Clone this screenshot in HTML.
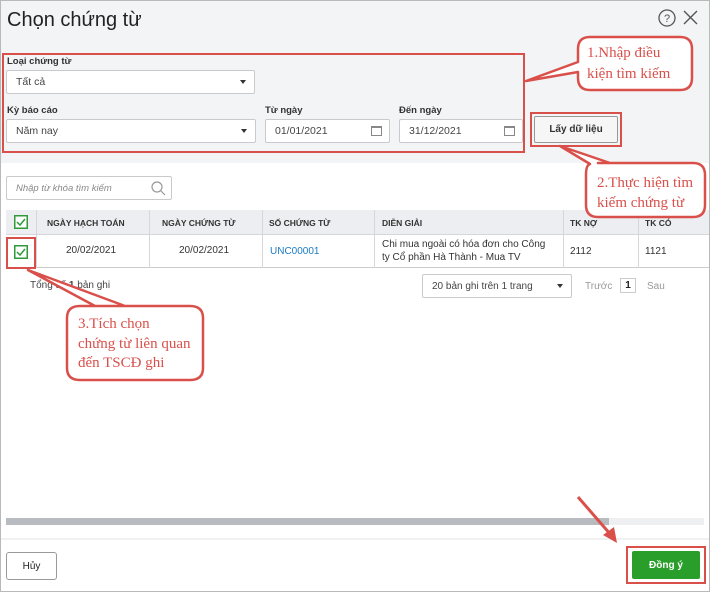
<!DOCTYPE html>
<html><head><meta charset="utf-8"><style>
*{box-sizing:border-box;margin:0;padding:0}
body{width:710px;height:592px;overflow:hidden;font-family:"Liberation Sans",sans-serif;background:#fff;position:relative;color:#222}
.abs{position:absolute}
.top{left:0;top:0;width:710px;height:163px;background:#f3f4f6}
.frame{left:0;top:0;width:710px;height:592px;border:1px solid #b9b9b9}
.lbl{font-size:9.5px;font-weight:bold;color:#333}
.inp{background:#fff;border:1px solid #c8cacd;border-radius:2px;font-size:10.5px;color:#444;padding-left:9px;display:flex;align-items:center}
.caret{position:absolute;right:8px;top:50%;margin-top:-2px;border-left:3.5px solid transparent;border-right:3.5px solid transparent;border-top:4px solid #333}
.red{border:2px solid #d9504b}
.th{font-size:8.5px;font-weight:bold;color:#333;display:flex;align-items:center}
.cb{width:12px;height:12px;border:1.5px solid #2e9a3a;background:#fff}
.cal{position:absolute;right:7px;top:6px;width:11px;height:10px;border:1px solid #888;border-top-width:2px}
</style></head><body>
<div class="abs top"></div>
<div class="abs" style="left:7px;top:9px;font-size:20px;color:#222">Chọn chứng từ</div>
<svg class="abs" style="left:655px;top:7px" width="50" height="22"><circle cx="12" cy="11" r="8" fill="none" stroke="#555" stroke-width="1.3"/><text x="12" y="15" font-size="11" text-anchor="middle" fill="#555" font-family="Liberation Sans">?</text><path d="M29 4 L42 17 M42 4 L29 17" stroke="#555" stroke-width="1.4"/></svg>

<div class="abs red" style="left:2px;top:53px;width:523px;height:100px"></div>
<div class="abs lbl" style="left:7px;top:56px">Loại chứng từ</div>
<div class="abs inp" style="left:6px;top:70px;width:249px;height:24px">Tất cả<span class="caret"></span></div>
<div class="abs lbl" style="left:7px;top:105px">Kỳ báo cáo</div>
<div class="abs inp" style="left:6px;top:119px;width:250px;height:24px">Năm nay<span class="caret"></span></div>
<div class="abs lbl" style="left:265px;top:105px">Từ ngày</div>
<div class="abs inp" style="left:265px;top:119px;width:125px;height:24px">01/01/2021<span class="cal"></span></div>
<div class="abs lbl" style="left:399px;top:105px">Đến ngày</div>
<div class="abs inp" style="left:399px;top:119px;width:124px;height:24px">31/12/2021<span class="cal"></span></div>
<div class="abs red" style="left:530px;top:112px;width:92px;height:35px"></div>
<div class="abs" style="left:534px;top:116px;width:84px;height:27px;border:1px solid #999;border-radius:2px;background:#f6f6f6;font-size:10px;font-weight:bold;display:flex;align-items:center;justify-content:center;color:#333">Lấy dữ liệu</div>

<div class="abs inp" style="left:6px;top:176px;width:166px;height:24px;font-style:italic;color:#888;font-size:9.5px">Nhập từ khóa tìm kiếm</div>
<svg class="abs" style="left:150px;top:180px" width="16" height="16"><circle cx="7" cy="7" r="5" fill="none" stroke="#999" stroke-width="1.2"/><path d="M11 11 L15 15" stroke="#999" stroke-width="1.2"/></svg>

<div class="abs" style="left:6px;top:210px;width:704px;height:25px;background:#eceef1;border-bottom:1px solid #d5d7da"></div>
<div class="abs" style="left:6px;top:235px;width:704px;height:33px;border-bottom:1px solid #ccc"></div>
<div class="abs" style="left:36px;top:210px;height:58px;border-left:1px solid #d5d7da"></div>
<div class="abs" style="left:149px;top:210px;height:58px;border-left:1px solid #d5d7da"></div>
<div class="abs" style="left:262px;top:210px;height:58px;border-left:1px solid #d5d7da"></div>
<div class="abs" style="left:374px;top:210px;height:58px;border-left:1px solid #d5d7da"></div>
<div class="abs" style="left:563px;top:210px;height:58px;border-left:1px solid #d5d7da"></div>
<div class="abs" style="left:638px;top:210px;height:58px;border-left:1px solid #d5d7da"></div>
<svg class="abs" style="left:14px;top:215px" width="14" height="14"><rect x="0.75" y="0.75" width="12.5" height="12.5" fill="#fff" stroke="#2e9a3a" stroke-width="1.5"/><path d="M3 7 L6 10 L11 4" fill="none" stroke="#2e9a3a" stroke-width="1.5"/></svg>
<div class="abs th" style="left:47px;top:210px;height:25px">NGÀY HẠCH TOÁN</div>
<div class="abs th" style="left:162px;top:210px;height:25px">NGÀY CHỨNG TỪ</div>
<div class="abs th" style="left:269px;top:210px;height:25px">SỐ CHỨNG TỪ</div>
<div class="abs th" style="left:382px;top:210px;height:25px">DIỄN GIẢI</div>
<div class="abs th" style="left:570px;top:210px;height:25px">TK NỢ</div>
<div class="abs th" style="left:645px;top:210px;height:25px">TK CÓ</div>
<div class="abs red" style="left:6px;top:237px;width:30px;height:32px"></div>
<svg class="abs" style="left:14px;top:245px" width="14" height="14"><rect x="0.75" y="0.75" width="12.5" height="12.5" fill="#fff" stroke="#2e9a3a" stroke-width="1.5"/><path d="M3 7 L6 10 L11 4" fill="none" stroke="#2e9a3a" stroke-width="1.5"/></svg>
<div class="abs" style="left:66px;top:245px;font-size:10px;color:#333">20/02/2021</div>
<div class="abs" style="left:179px;top:245px;font-size:10px;color:#333">20/02/2021</div>
<div class="abs" style="left:270px;top:246px;font-size:10px;color:#1a7bc4">UNC00001</div>
<div class="abs" style="left:382px;top:238px;font-size:10px;color:#333;line-height:13px">Chi mua ngoài có hóa đơn cho Công<br>ty Cổ phần Hà Thành - Mua TV</div>
<div class="abs" style="left:570px;top:246px;font-size:10px;color:#333">2112</div>
<div class="abs" style="left:645px;top:246px;font-size:10px;color:#333">1121</div>

<div class="abs" style="left:30px;top:280px;font-size:10px;color:#444">Tổng số <b>1</b> bản ghi</div>
<div class="abs inp" style="left:422px;top:274px;width:150px;height:24px;font-size:10px">20 bản ghi trên 1 trang<span class="caret"></span></div>
<div class="abs" style="left:585px;top:281px;font-size:10px;color:#999">Trước</div>
<div class="abs" style="left:620px;top:278px;width:16px;height:15px;border:1px solid #ccc;font-size:10px;font-weight:bold;text-align:center;line-height:13px">1</div>
<div class="abs" style="left:647px;top:281px;font-size:10px;color:#999">Sau</div>

<div class="abs" style="left:6px;top:518px;width:698px;height:7px;background:#eeeff0"></div>
<div class="abs" style="left:6px;top:518px;width:603px;height:7px;background:#b8bbc0"></div>
<div class="abs" style="left:0;top:538px;width:710px;border-top:2px solid #f0f1f2"></div>
<div class="abs" style="left:6px;top:552px;width:51px;height:28px;border:1px solid #999;border-radius:3px;font-size:10px;display:flex;align-items:center;justify-content:center">Hủy</div>
<div class="abs red" style="left:626px;top:546px;width:80px;height:38px"></div>
<div class="abs" style="left:632px;top:551px;width:68px;height:28px;background:#2a9e2a;border-radius:2px;color:#fff;font-size:10px;font-weight:bold;display:flex;align-items:center;justify-content:center">Đồng ý</div>

<div class="abs frame"></div>

<svg class="abs" style="left:0;top:0" width="710" height="592">
<g fill="#fff" stroke="#d9504b" stroke-width="2.5" stroke-linejoin="round">
<path d="M590 37 H680 Q692 37 692 49 V78 Q692 90 680 90 H590 Q578 90 578 78 V72 L526 81 L578 62 V49 Q578 37 590 37 Z"/>
<path d="M598 163 H693 Q705 163 705 175 V205 Q705 217 693 217 H598 Q586 217 586 205 V175 Q586 165 590 164 L560 146 L610 163 Z"/>
<path d="M80 306 H190 Q203 306 203 318 V368 Q203 380 190 380 H80 Q67 380 67 368 V318 Q67 306 80 306 L95 306 L28 270 L125 306 Z"/>
</g>
<g fill="#d9504b" font-family="Liberation Serif" font-size="15">
<text x="587" y="57">1.Nhập điều</text><text x="587" y="78">kiện tìm kiếm</text>
<text x="597" y="187">2.Thực hiện tìm</text><text x="597" y="207">kiếm chứng từ</text>
<text x="78" y="328">3.Tích chọn</text><text x="78" y="348">chứng từ liên quan</text><text x="78" y="367">đến TSCĐ ghi</text>
</g>
<path d="M578 497 L611 535" stroke="#d9504b" stroke-width="3"/>
<path d="M617 543 L603 535 L614 527 Z" fill="#d9504b"/>
</svg>
</body></html>
